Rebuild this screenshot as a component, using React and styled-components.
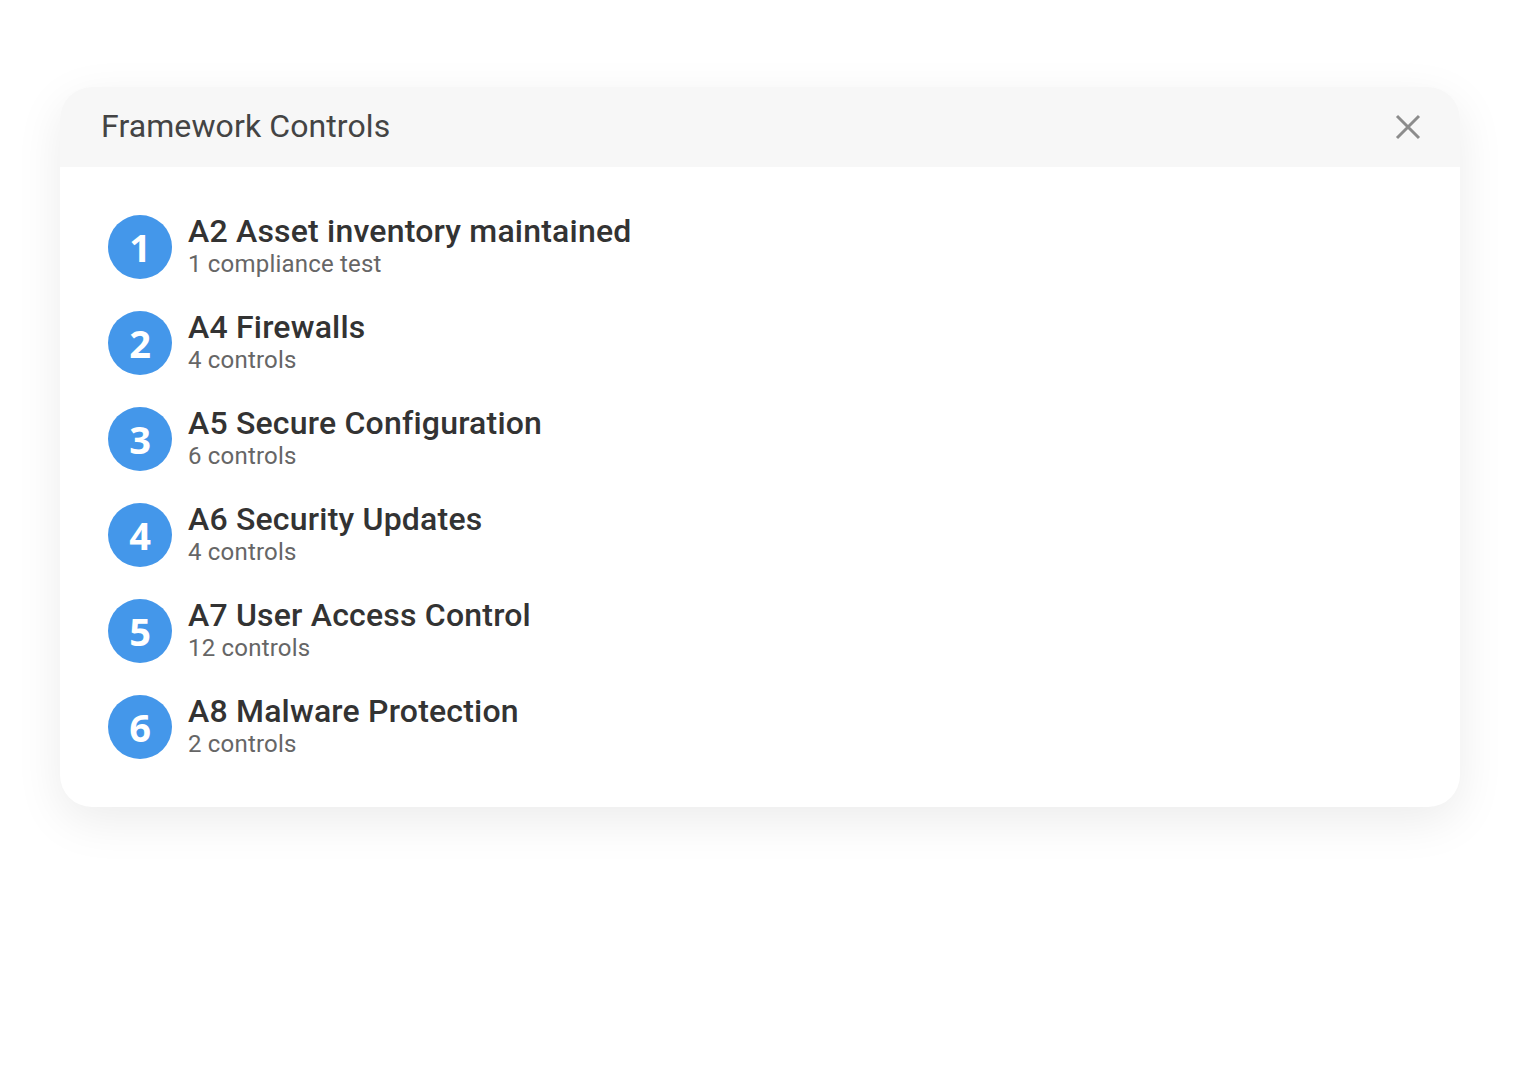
import styled, { createGlobalStyle } from "styled-components";

const GlobalStyle = createGlobalStyle`
  body {
    margin: 0;
    background: #ffffff;
    font-family: Roboto, "Liberation Sans", sans-serif;
  }
`;

const controls = [
  { title: "A2 Asset inventory maintained", sub: "1 compliance test" },
  { title: "A4 Firewalls", sub: "4 controls" },
  { title: "A5 Secure Configuration", sub: "6 controls" },
  { title: "A6 Security Updates", sub: "4 controls" },
  { title: "A7 User Access Control", sub: "12 controls" },
  { title: "A8 Malware Protection", sub: "2 controls" },
];

const App = () => {
  return (
    <>
      <GlobalStyle />
      <Page>
        <Card>
          <Header>
            <Title>Framework Controls</Title>
            <CloseButton aria-label="Close">
              <svg width="28" height="28" viewBox="0 0 28 28">
                <path d="M3 3 L25 25 M25 3 L3 25" stroke="#8c8c8c" strokeWidth="3" />
              </svg>
            </CloseButton>
          </Header>
          <List>
            {controls.map((c, i) => (
              <Row key={c.title}>
                <Badge>{i + 1}</Badge>
                <Text>
                  <RowTitle>{c.title}</RowTitle>
                  <RowSub>{c.sub}</RowSub>
                </Text>
              </Row>
            ))}
          </List>
        </Card>
      </Page>
    </>
  );
};

export default App;

const Page = styled.div`
  padding: 87px 60px 60px;
`;

const Card = styled.div`
  background: #ffffff;
  border-radius: 32px;
  overflow: hidden;
  box-shadow: 0 14px 48px rgba(0, 0, 0, 0.08);
`;

const Header = styled.div`
  height: 80px;
  background: #f7f7f7;
  display: flex;
  align-items: center;
  justify-content: space-between;
  padding: 0 38px 0 41px;
`;

const Title = styled.div`
  font-size: 32px;
  color: #444444;
  letter-spacing: 0.1px;
  margin-top: -2px;
`;

const CloseButton = styled.div`
  display: flex;
  cursor: pointer;
`;

const List = styled.div`
  display: flex;
  flex-direction: column;
  gap: 32px;
  padding: 48px 48px;
`;

const Row = styled.div`
  display: flex;
  align-items: center;
  gap: 16px;
  height: 64px;
`;

const Badge = styled.div`
  width: 64px;
  height: 64px;
  border-radius: 50%;
  background: #4497ea;
  color: #ffffff;
  display: flex;
  align-items: center;
  justify-content: center;
  font-family: "Open Sans", sans-serif;
  font-weight: 700;
  font-size: 38px;
  flex-shrink: 0;
`;

const Text = styled.div`
  display: flex;
  flex-direction: column;
  gap: 3px;
`;

const RowTitle = styled.div`
  font-size: 32px;
  font-weight: 500;
  color: #333333;
  line-height: 32px;
  letter-spacing: 0.2px;
`;

const RowSub = styled.div`
  font-size: 24px;
  color: #666666;
  line-height: 29px;
  letter-spacing: 0.2px;
`;
